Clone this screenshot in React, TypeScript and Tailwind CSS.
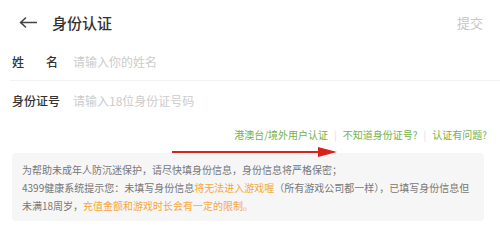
const cjk = { fontFamily: '"Noto Sans CJK SC", "Noto Sans", sans-serif' }

export default function App() {
  return (
    <div className="relative h-[246px] w-[500px] overflow-hidden bg-white" style={cjk}>
      {/* Header */}
      <div className="flex h-[44px] items-center pl-[19px] pr-[17px]">
        <svg width="18" height="11" viewBox="0 0 18 11" fill="none" stroke="#444" strokeWidth="1.6" strokeLinecap="round" strokeLinejoin="round">
          <path d="M1.5 5.5H17.5M6.5 1L1.5 5.5L6.5 10" />
        </svg>
        <div className="ml-[15px] text-[15px] font-medium leading-none text-[#333]">身份认证</div>
        <div className="ml-auto text-[13px] leading-none text-[#c6c6c6]">提交</div>
      </div>

      {/* Form */}
      <div className="flex h-[36px] items-center pl-[12px]">
        <div className="flex w-[46px] shrink-0 justify-between whitespace-nowrap text-[12px] font-medium text-[#333]">
          <span>姓</span>
          <span>名</span>
        </div>
        <div className="ml-[15px] text-[12px] text-[#cccccc]">请输入你的姓名</div>
      </div>
      <div className="ml-[10px] h-px bg-[#f2f2f2]" />
      <div className="flex h-[39px] items-center pl-[12px]">
        <div className="w-[46px] shrink-0 whitespace-nowrap text-[12px] font-medium text-[#333]">身份证号</div>
        <div className="ml-[15px] text-[12px] text-[#cccccc]">请输入18位身份证号码</div>
      </div>

      {/* Links */}
      <div className="mt-[8px] flex items-center justify-end pr-[13px] text-[10px] leading-[14px] text-[#74b14b]">
        <span>港澳台/境外用户认证</span>
        <span className="mx-[6px] text-[#dddddd]">|</span>
        <span>不知道身份证号?</span>
        <span className="mx-[6px] text-[#dddddd]">|</span>
        <span>认证有问题?</span>
      </div>

      {/* Notice */}
      <div className="ml-[12px] mr-[16px] mt-[11px] rounded-[4px] bg-[#f6f6f6] pb-[6px] pl-[10px] pt-[8px] text-[10px] leading-[18px] text-[#777]">
        为帮助未成年人防沉迷保护，请尽快填身份信息，身份信息将严格保密；
        <br />
        4399健康系统提示您：未填写身份信息<span className="text-[#f5a83a]">将无法进入游戏喔</span>（所有游戏公司都一样），已填写身份信息但
        <br />
        未满18周岁，<span className="text-[#f5a83a]">充值金额和游戏时长会有一定的限制。</span>
      </div>

      {/* Annotation arrow */}
      <svg className="absolute left-[172px] top-[146px]" width="166" height="12" viewBox="0 0 166 12">
        <line x1="0" y1="6" x2="150" y2="6" stroke="#d8231b" strokeWidth="2.2" />
        <polygon points="146,1 165,6 146,11" fill="#d8231b" />
      </svg>
    </div>
  )
}
